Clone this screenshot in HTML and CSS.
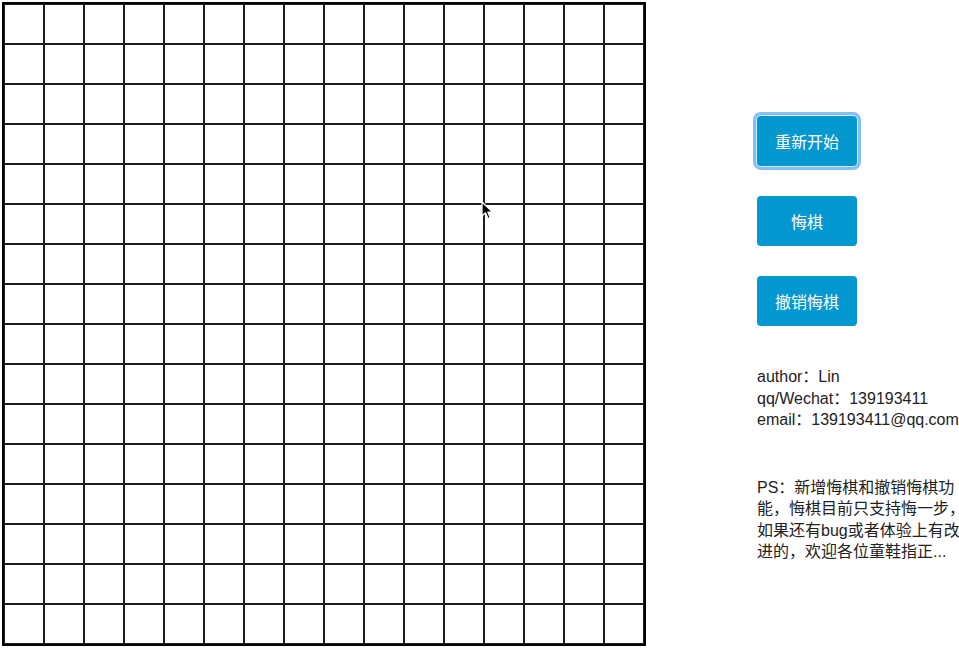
FILE: index.html
```html
<!DOCTYPE html>
<html lang="zh-CN">
<head>
<meta charset="utf-8">
<title>五子棋</title>
<link rel="stylesheet" href="styles.css">
</head>
<body>
<div class="page">
  <div class="board-wrap">
    <div class="board"></div>
    <svg class="cursor" width="14" height="20" viewBox="0 0 14 20">
      <path d="M1 1 L1 15 L4.5 11.8 L7 17.5 L9.2 16.5 L6.8 11 L11.5 11 Z" fill="#000" stroke="#fff" stroke-width="1.2" stroke-linejoin="round"/>
    </svg>
  </div>
  <div class="panel">
    <button class="btn btn-focus">重新开始</button>
    <button class="btn">悔棋</button>
    <button class="btn">撤销悔棋</button>
    <div class="info">
      <p>author：Lin</p>
      <p>qq/Wechat：139193411</p>
      <p>email：139193411@qq.com</p>
    </div>
    <p class="note">PS：新增悔棋和撤销悔棋功能，悔棋目前只支持悔一步，如果还有bug或者体验上有改进的，欢迎各位童鞋指正...</p>
  </div>
</div>
</body>
</html>
```
FILE: styles.css
```css
html, body {
  margin: 0;
  padding: 0;
  background: #fff;
}
body {
  font-family: "Liberation Sans", "Noto Sans CJK SC", sans-serif;
  color: #222;
  overflow: hidden;
}
.page {
  display: flex;
  align-items: flex-start;
  width: 959px;
  height: 653px;
}
.board-wrap {
  position: relative;
  flex: none;
  margin: 2px 0 0 2px;
}
.board {
  width: 640px;
  height: 640px;
  border: 2px solid #000;
  background-color: #fff;
  background-image:
    linear-gradient(to right, #1e1e1e 2px, transparent 2px),
    linear-gradient(to bottom, #1e1e1e 2px, transparent 2px);
  background-size: 40px 40px;
  background-position: -1px -1px;
}
.cursor {
  position: absolute;
  left: 479px;
  top: 199px;
}
.panel {
  flex: none;
  display: flex;
  flex-direction: column;
  align-items: flex-start;
  margin-left: 111px;
  padding-top: 116px;
  width: 210px;
}
.btn {
  width: 100px;
  height: 50px;
  margin: 0 0 30px 0;
  padding: 0;
  border: none;
  border-radius: 4px;
  background: #0399d0;
  color: #fff;
  font-family: "Noto Sans CJK SC", sans-serif;
  font-size: 16px;
  font-weight: 400;
  cursor: pointer;
}
.btn-focus {
  box-shadow: 0 0 0 1px #d6eaff, 0 0 0 4px #84bffb;
}
.info {
  margin-top: 10px;
}
.info p, .note {
  margin: 0;
  font-size: 16px;
  line-height: 21.5px;
}
.note {
  margin-top: 46px;
  width: 210px;
}
```
